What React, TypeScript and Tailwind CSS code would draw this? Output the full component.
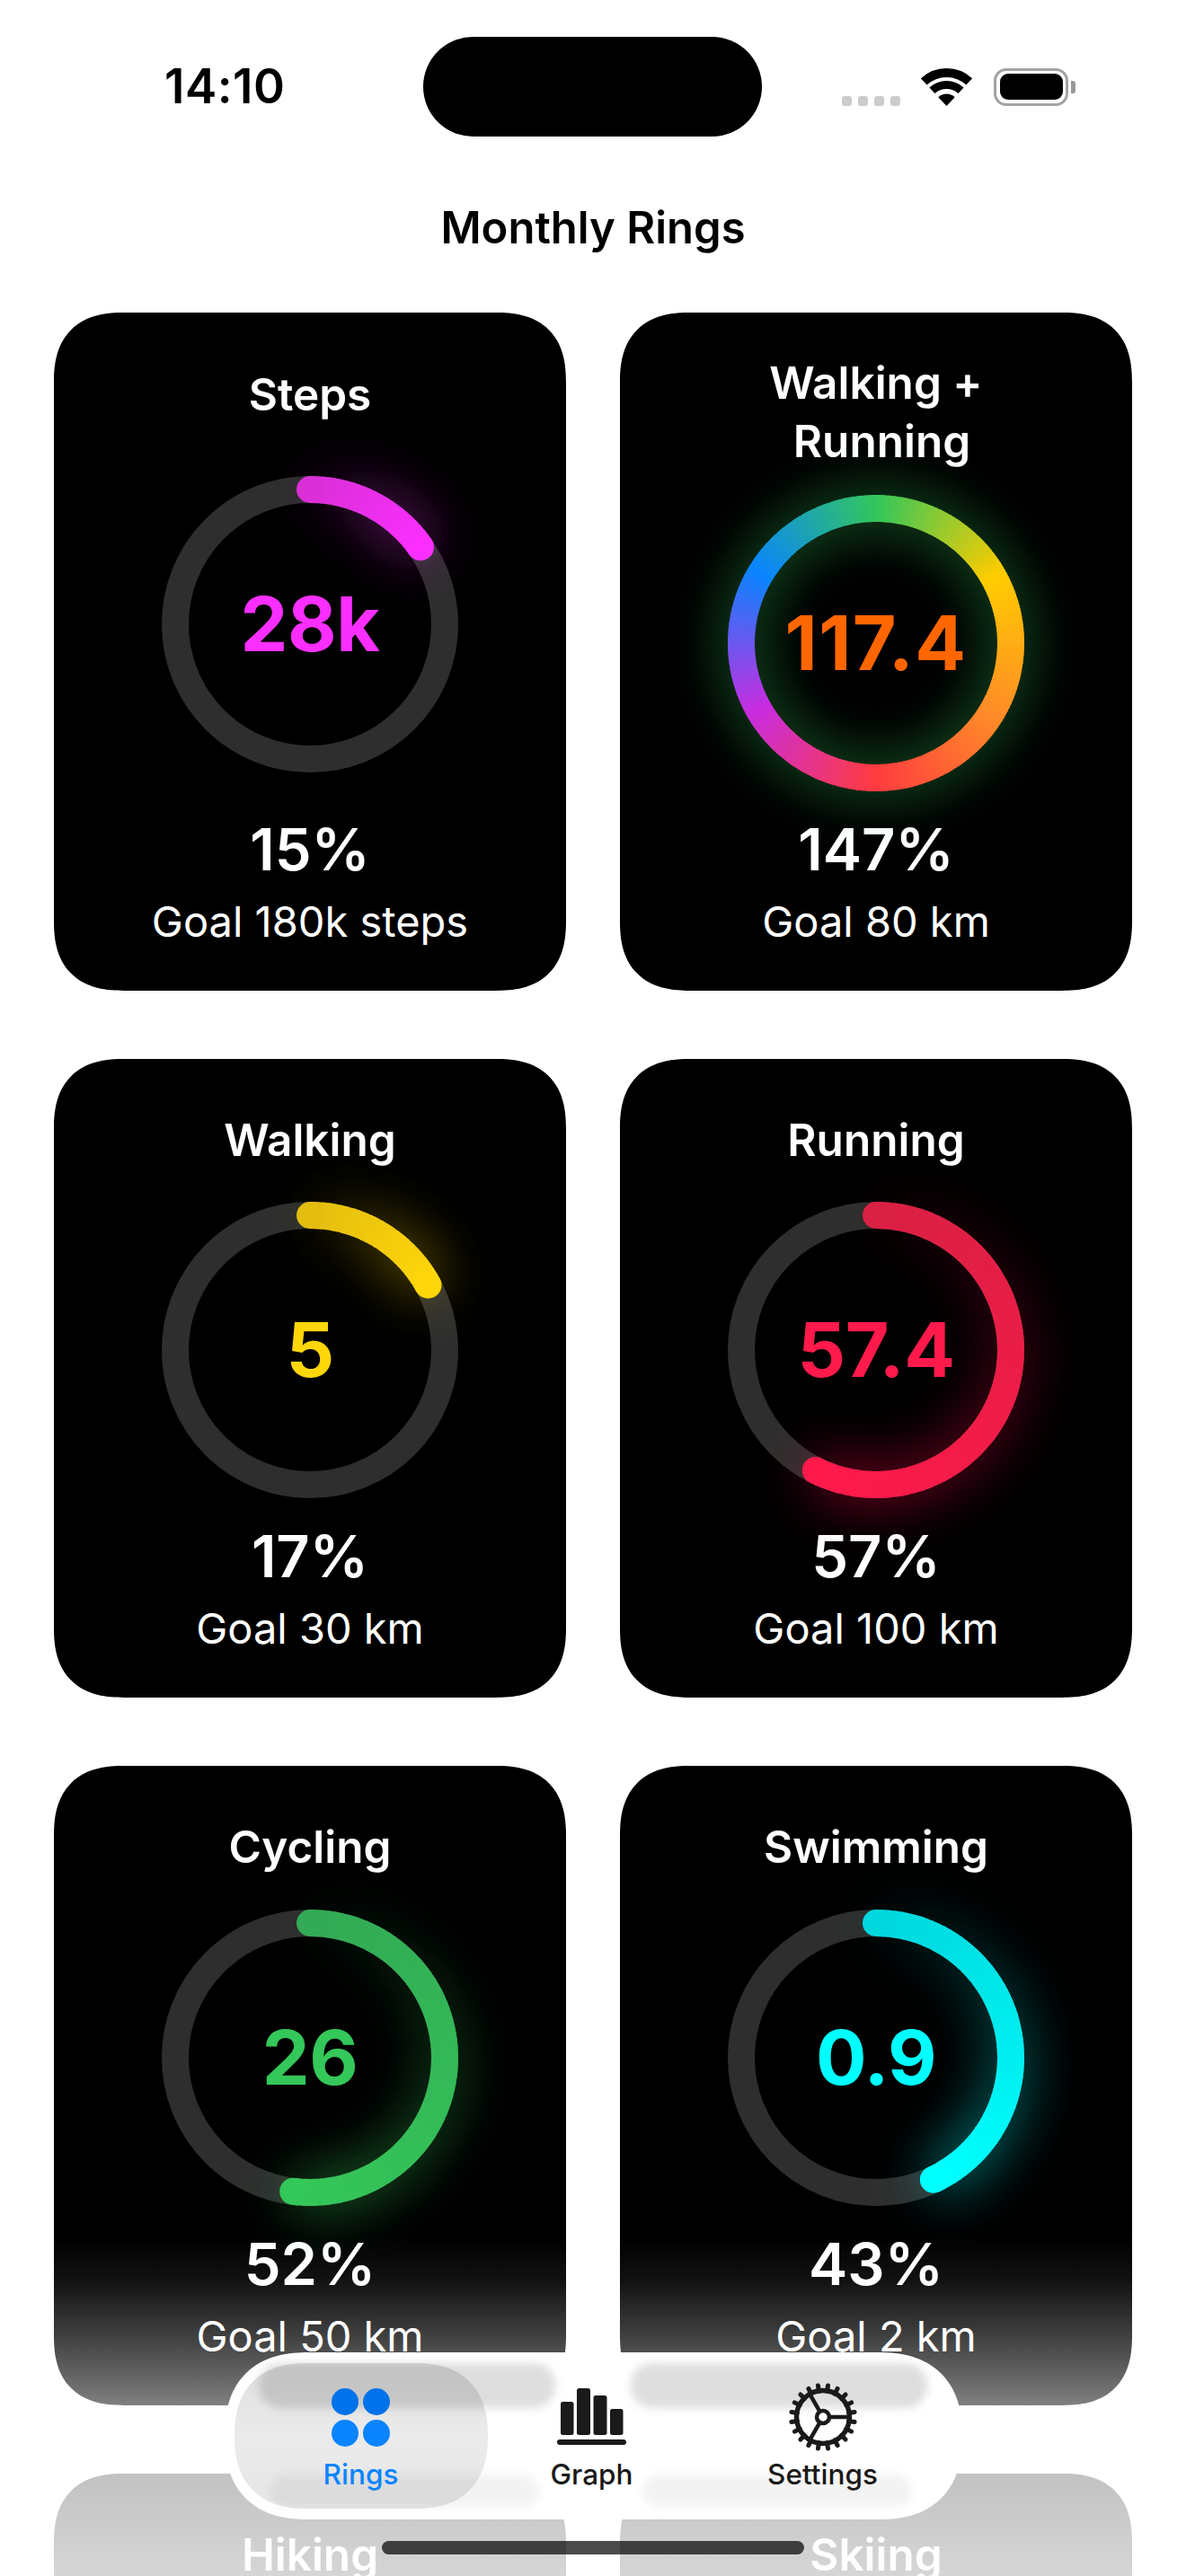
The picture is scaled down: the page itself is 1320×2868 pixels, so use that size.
import React from "react";

type CardData = {
  id: string;
  title: string[];
  value: string;
  pct: string;
  goal: string;
  progress: number;
  color: [number, number, number];
  start: [number, number, number];
  valueClass: string;
  padClass: string;
  ringClass: string;
  rainbow?: boolean;
};

const cards: CardData[] = [
  { id: "steps", title: ["Steps"], value: "28k", pct: "15%", goal: "Goal 180k steps", progress: 0.153, color: [250, 47, 255], start: [218, 47, 214], valueClass: "text-[#fa2fff] tracking-[-0.5px]", padClass: "pt-[59px]", ringClass: "mt-[58px]" },
  { id: "combo", title: ["Walking +", "Running"], value: "117.4", pct: "147%", goal: "Goal 80 km", progress: 1, color: [52, 199, 89], start: [52, 199, 89], valueClass: "text-[#ff6600] tracking-[1.5px]", padClass: "pt-[46px]", ringClass: "mt-[27px]", rainbow: true },
  { id: "walking", title: ["Walking"], value: "5", pct: "17%", goal: "Goal 30 km", progress: 0.17, color: [255, 214, 10], start: [228, 190, 15], valueClass: "text-[#ffd60a] tracking-[-0.5px]", padClass: "pt-[58px]", ringClass: "mt-[36px]" },
  { id: "running", title: ["Running"], value: "57.4", pct: "57%", goal: "Goal 100 km", progress: 0.574, color: [255, 26, 75], start: [218, 32, 68], valueClass: "text-[#ff1a4b] tracking-[-0.5px]", padClass: "pt-[58px]", ringClass: "mt-[36px]" },
  { id: "cycling", title: ["Cycling"], value: "26", pct: "52%", goal: "Goal 50 km", progress: 0.52, color: [52, 199, 89], start: [51, 170, 85], valueClass: "text-[#34c759] tracking-[-0.5px]", padClass: "pt-[58px]", ringClass: "mt-[37px]" },
  { id: "swimming", title: ["Swimming"], value: "0.9", pct: "43%", goal: "Goal 2 km", progress: 0.43, color: [0, 255, 255], start: [0, 216, 221], valueClass: "text-[#00ffff] tracking-[-0.5px]", padClass: "pt-[58px]", ringClass: "mt-[37px]" },
];

const rainbowStops: [number, [number, number, number]][] = [
  [0, [52, 199, 89]],
  [60, [255, 204, 0]],
  [120, [255, 140, 40]],
  [180, [255, 59, 64]],
  [240, [200, 45, 224]],
  [300, [10, 132, 255]],
  [360, [52, 199, 89]],
];

const C = 165;
const R = 150;

function pt(deg: number, r = R): [number, number] {
  const a = ((deg - 90) * Math.PI) / 180;
  return [C + r * Math.cos(a), C + r * Math.sin(a)];
}

function arcPath(a: number, b: number) {
  const [x1, y1] = pt(a);
  const [x2, y2] = pt(b);
  return `M${x1.toFixed(2)} ${y1.toFixed(2)}A${R} ${R} 0 ${b - a > 180 ? 1 : 0} 1 ${x2.toFixed(2)} ${y2.toFixed(2)}`;
}

function mix(a: number[], b: number[], t: number) {
  return `rgb(${a.map((v, i) => Math.round(v + (b[i] - v) * t)).join(",")})`;
}

function rainbowAt(deg: number) {
  for (let i = 0; i < rainbowStops.length - 1; i++) {
    const [d0, c0] = rainbowStops[i];
    const [d1, c1] = rainbowStops[i + 1];
    if (deg <= d1) return mix(c0, c1, (deg - d0) / (d1 - d0));
  }
  return mix(rainbowStops[0][1], rainbowStops[0][1], 0);
}

function Ring({ d }: { d: CardData }) {
  const total = d.progress * 360;
  const step = d.rainbow ? 1.5 : 2.5;
  const n = Math.ceil(total / step);
  const segs = Array.from({ length: n }, (_, i) => {
    const a = (i / n) * total;
    const b = Math.min(total, ((i + 1) / n) * total + 0.5);
    return { a, b, t: i / Math.max(1, n - 1) };
  });
  const startCap = pt(0);
  const endCap = pt(total);
  return (
    <div className={`relative h-[330px] w-[330px] shrink-0 ${d.ringClass}`}>
      <svg width="330" height="330" viewBox="0 0 330 330" className="absolute inset-0 overflow-visible">
        <defs>
          <filter id={`glow-${d.id}`} filterUnits="userSpaceOnUse" x="-150" y="-150" width="630" height="630">
            <feGaussianBlur stdDeviation="30" />
          </filter>
        </defs>
        {!d.rainbow && <circle cx={C} cy={C} r={R} fill="none" stroke="#2e2e2e" strokeWidth="30" />}
        <g filter={`url(#glow-${d.id})`} fill="none" strokeWidth="34">
          {d.rainbow ? (
            <circle cx={C} cy={C} r={R} stroke="rgb(52,199,89)" strokeOpacity="0.5" />
          ) : (
            segs.map((s, i) => (
              <path key={i} d={arcPath(s.a, s.b)} stroke={mix(d.color, d.color, 0)} strokeOpacity={0.05 + 0.55 * s.t} />
            ))
          )}
        </g>
        <g fill="none" strokeWidth="30">
          {segs.map((s, i) => (
            <path
              key={i}
              d={arcPath(s.a, s.b)}
              stroke={d.rainbow ? rainbowAt(s.a) : mix(d.start, d.color, s.t)}
            />
          ))}
        </g>
        {!d.rainbow && (
          <>
            <circle cx={startCap[0]} cy={startCap[1]} r="15" fill={mix(d.start, d.start, 0)} />
            <circle cx={endCap[0]} cy={endCap[1]} r="15" fill={mix(d.color, d.color, 0)} />
          </>
        )}
      </svg>
      <div className={`absolute inset-0 flex items-center justify-center text-[84px] leading-none font-bold ${d.valueClass}`}>
        {d.value}
      </div>
    </div>
  );
}

function Card({ d }: { d: CardData }) {
  return (
    <div className={`flex flex-col items-center rounded-[78px] bg-black text-white [corner-shape:superellipse(1.3)] ${d.padClass}`}>
      <div className="text-center text-[49.5px] leading-[65px] font-semibold">
        {d.title.map((t, i) => (
          <div key={t} className={i === 1 ? "pl-[13px]" : ""}>
            {t}
          </div>
        ))}
      </div>
      <Ring d={d} />
      <div className="mt-auto flex flex-col items-center pb-[47px]">
        <div className="mt-[25px] text-[65px] leading-[80px] font-semibold">{d.pct}</div>
        <div className="mt-[10px] text-[47px] leading-[60px] font-normal">{d.goal}</div>
      </div>
    </div>
  );
}

function GearIcon() {
  const c = 38;
  const teeth = Array.from({ length: 20 }, (_, i) => {
    const a = ((i * 18 + 9) * Math.PI) / 180;
    return (
      <line
        key={i}
        x1={c + 29 * Math.cos(a)}
        y1={c + 29 * Math.sin(a)}
        x2={c + 35.5 * Math.cos(a)}
        y2={c + 35.5 * Math.sin(a)}
        strokeWidth="5"
        strokeLinecap="round"
      />
    );
  });
  const spoke = (deg: number) => {
    const a = (deg * Math.PI) / 180;
    return <line x1={c + 8 * Math.cos(a)} y1={c + 8 * Math.sin(a)} x2={c + 29 * Math.cos(a)} y2={c + 29 * Math.sin(a)} strokeWidth="4.5" />;
  };
  return (
    <svg width="76" height="76" viewBox="0 0 76 76" fill="none" stroke="#1a1a1a">
      {teeth}
      <circle cx={c} cy={c} r="29.5" strokeWidth="5.5" />
      {spoke(0)}
      {spoke(120)}
      {spoke(240)}
      <circle cx={c} cy={c} r="7" strokeWidth="4.5" />
    </svg>
  );
}

function GraphIcon() {
  return (
    <svg width="78" height="64" viewBox="0 0 78 64" fill="#1a1a1a">
      <rect x="4" y="15" width="14.5" height="37" rx="2.5" />
      <rect x="22" y="0" width="15" height="52" rx="2.5" />
      <rect x="40.5" y="8" width="15" height="44" rx="2.5" />
      <rect x="59" y="23" width="14.5" height="29" rx="2.5" />
      <rect x="0" y="57" width="77" height="6" rx="3" />
    </svg>
  );
}

function RingsIcon() {
  return (
    <div className="grid grid-cols-[30px_30px] gap-x-[5px] gap-y-[5px]">
      <div className="h-[30px] w-[30px] rounded-full bg-[#0072ea]" />
      <div className="h-[30px] w-[30px] rounded-full bg-[#0072ea]" />
      <div className="h-[30px] w-[30px] rounded-full bg-[#0a84ff]" />
      <div className="h-[30px] w-[30px] rounded-full bg-[#0a84ff]" />
    </div>
  );
}

function WifiIcon() {
  const cx = 28.5;
  const cy = 42;
  const arc = (r: number) => {
    const a = (43 * Math.PI) / 180;
    return `M${cx - r * Math.sin(a)} ${cy - r * Math.cos(a)}A${r} ${r} 0 0 1 ${cx + r * Math.sin(a)} ${cy - r * Math.cos(a)}`;
  };
  return (
    <svg width="57" height="42" viewBox="0 0 57 42" fill="none" stroke="#000">
      <path d={arc(37)} strokeWidth="10" />
      <path d={arc(23.5)} strokeWidth="9" />
      <path d="M28.5 42L19.3 32.2A13.4 13.4 0 0 1 37.7 32.2Z" fill="#000" stroke="none" />
    </svg>
  );
}

function StatusBar() {
  return (
    <div className="mt-[41px] flex h-[111px] items-center pl-[183px]">
      <div className="w-[288px] text-[53px] leading-none font-semibold tracking-[0.5px] text-black">14:10</div>
      <div className="h-[111px] w-[377px] rounded-full bg-black" />
      <div className="ml-[89px] flex h-[42px] items-end self-center">
        <div className="flex gap-[7px]">
          <div className="h-[11px] w-[11px] rounded-[3px] bg-[#cccccc]" />
          <div className="h-[11px] w-[11px] rounded-[3px] bg-[#cccccc]" />
          <div className="h-[11px] w-[11px] rounded-[3px] bg-[#cccccc]" />
          <div className="h-[11px] w-[11px] rounded-[3px] bg-[#cccccc]" />
        </div>
        <div className="ml-[23px]">
          <WifiIcon />
        </div>
        <div className="ml-[24px] flex h-[42px] items-center">
          <div className="flex h-[42px] w-[83px] items-center justify-center rounded-[14px] border-[3.5px] border-[#a3a3a3]">
            <div className="h-[29px] w-[70px] rounded-[9px] bg-black" />
          </div>
          <div className="ml-[3px] h-[14px] w-[5px] rounded-r-[3px] bg-[#999999]" />
        </div>
      </div>
    </div>
  );
}

function TabBar() {
  return (
    <div className="absolute top-[2619px] left-[250px] h-[186px] w-[821px] overflow-hidden rounded-[93px] bg-white [corner-shape:superellipse(1.25)]">
      <div className="absolute top-[12px] left-[38px] h-[50px] w-[330px] rounded-[24px] bg-[#dedede] blur-[5px]" />
      <div className="absolute top-[12px] left-[452px] h-[50px] w-[330px] rounded-[24px] bg-[#dedede] blur-[5px]" />
      <div className="absolute top-[136px] left-[50px] h-[36px] w-[300px] rounded-[18px] bg-[#f3f3f3] blur-[5px]" />
      <div className="absolute top-[136px] left-[465px] h-[36px] w-[300px] rounded-[18px] bg-[#f3f3f3] blur-[5px]" />
      <div className="absolute top-[12px] left-[11px] h-[162px] w-[282px] rounded-[81px] bg-gradient-to-b from-black/[0.13] via-black/[0.08] to-black/[0.1] [corner-shape:superellipse(1.25)]" />
      <div className="relative flex pt-[35px] pl-[23px]">
        <div className="flex w-[257px] flex-col items-center text-[#0a84ff]">
          <div className="flex h-[74px] items-center">
            <RingsIcon />
          </div>
          <div className="mt-[9px] text-[31.5px] leading-[36px] font-medium">Rings</div>
        </div>
        <div className="flex w-[257px] flex-col items-center text-[#1a1a1a]">
          <div className="flex h-[74px] items-center">
            <GraphIcon />
          </div>
          <div className="mt-[9px] text-[31.5px] leading-[36px] font-medium">Graph</div>
        </div>
        <div className="flex w-[257px] flex-col items-center text-[#1a1a1a]">
          <div className="flex h-[74px] items-center">
            <GearIcon />
          </div>
          <div className="mt-[9px] text-[31.5px] leading-[36px] font-medium">Settings</div>
        </div>
      </div>
    </div>
  );
}

export default function App() {
  return (
    <div className="relative h-[2868px] w-[1320px] overflow-hidden bg-white font-['Inter',sans-serif]">
      <StatusBar />
      <div className="mt-[72px] text-center text-[49px] leading-[60px] font-semibold text-black">Monthly Rings</div>
      <div className="mt-[64px] grid grid-cols-2 gap-x-[60px] gap-y-[76px] px-[60px]">
        {cards.map((d) => (
          <Card key={d.id} d={d} />
        ))}
        <div className="h-[711px] rounded-[78px] bg-black pt-[58px] text-center text-[49.5px] leading-[65px] font-semibold text-white [corner-shape:superellipse(1.3)]">Hiking</div>
        <div className="h-[711px] rounded-[78px] bg-black pt-[58px] text-center text-[49.5px] leading-[65px] font-semibold text-white [corner-shape:superellipse(1.3)]">Skiing</div>
      </div>
      <div className="absolute inset-x-0 bottom-0 h-[378px] bg-[linear-gradient(to_bottom,rgba(255,255,255,0)_0%,rgba(255,255,255,0.07)_13%,rgba(255,255,255,0.27)_31%,rgba(255,255,255,0.48)_48%,rgba(255,255,255,0.76)_70%,rgba(255,255,255,0.84)_100%)]" />
      <TabBar />
      <div className="absolute top-[2829px] left-[425px] h-[15px] w-[470px] rounded-full bg-black/70" />
    </div>
  );
}
